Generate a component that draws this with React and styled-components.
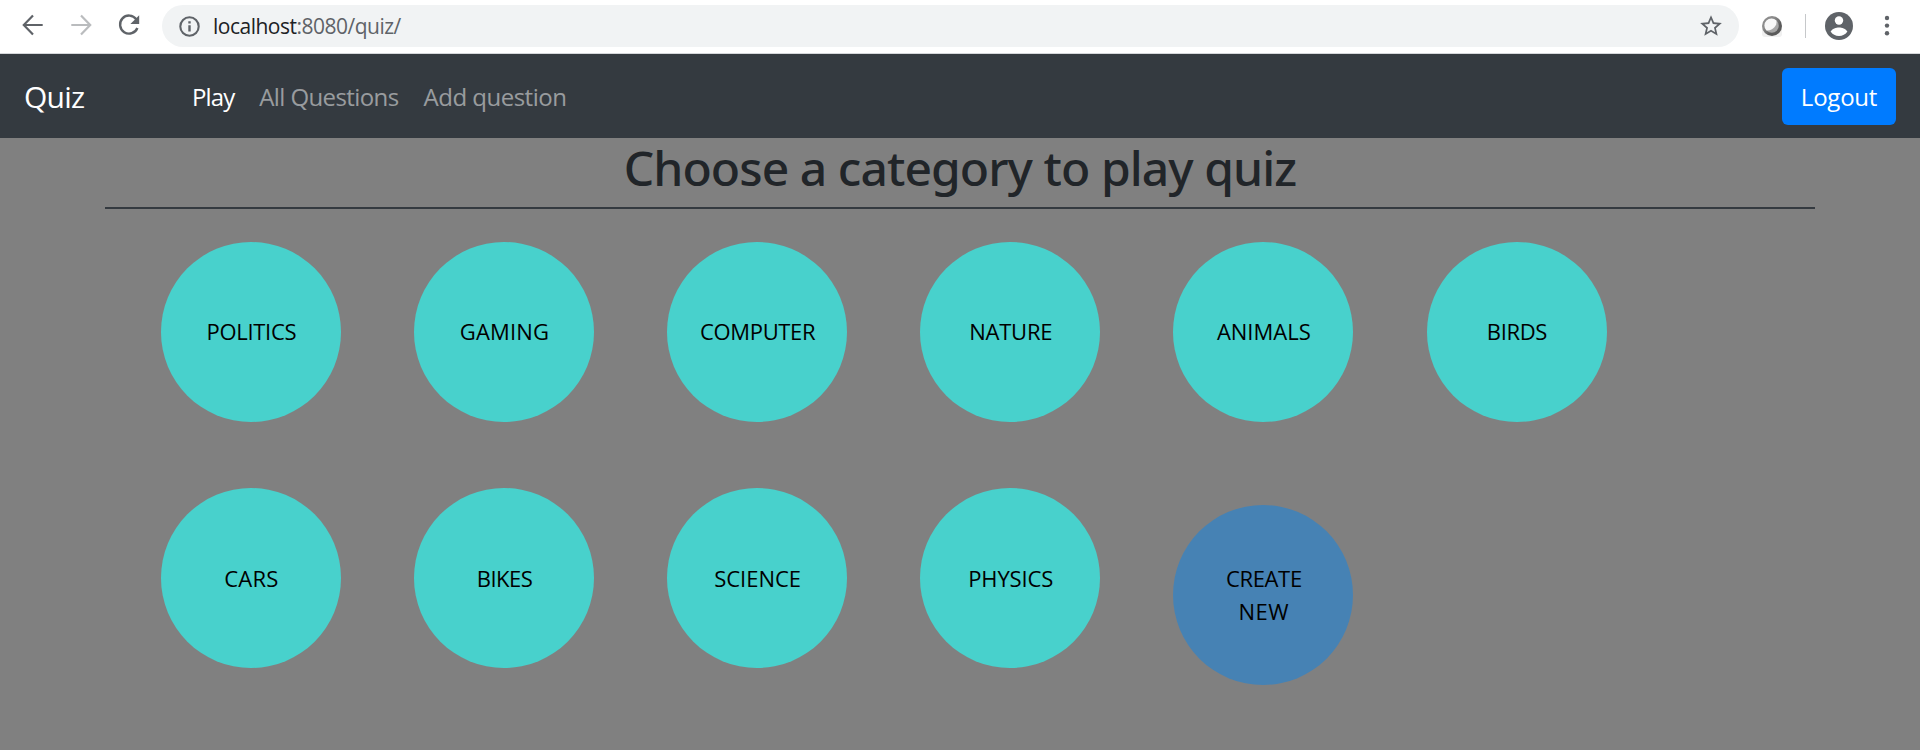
import React from 'react';
import styled, { createGlobalStyle } from 'styled-components';
import { MdStarBorder } from 'react-icons/md';

const GlobalStyle = createGlobalStyle`
  * { box-sizing: border-box; }
  body {
    margin: 0;
    background: #808080;
    font-family: 'Open Sans', 'Noto Sans', sans-serif;
    color: #212529;
    overflow: hidden;
  }
`;

const Page = styled.div`
  height: 750px;
  display: flex;
  flex-direction: column;
`;

const BrowserBar = styled.header`
  height: 54px;
  flex: none;
  display: flex;
  align-items: flex-start;
  padding: 5px 0 0 18px;
  background: #fff;
  border-bottom: 1px solid #d5d7da;
`;

const NavIcons = styled.div`
  display: flex;
  align-items: center;
  gap: 18px;
  height: 40px;
  svg { display: block; }
`;

const AddressBar = styled.div`
  height: 42px;
  width: 1577px;
  flex: none;
  margin-left: 18px;
  padding: 0 15px;
  display: flex;
  align-items: center;
  border-radius: 21px;
  background: #f1f3f4;
  color: #5f6368;
`;

const Url = styled.span`
  flex: 1;
  margin-left: 11px;
  font-size: 21px;
  line-height: 42px;
  letter-spacing: -0.5px;
  color: #5f6368;
`;

const Host = styled.span`
  color: #202124;
`;

const BrowserActions = styled.div`
  display: flex;
  align-items: center;
  height: 42px;
  margin-left: 22px;
  svg { display: block; }
`;

const Divider = styled.span`
  width: 1px;
  height: 24px;
  margin: 0 19px 0 22px;
  background: #c6c8ca;
`;

const Navbar = styled.nav`
  height: 84px;
  flex: none;
  display: flex;
  align-items: center;
  padding: 0 24px;
  background: #343a40;
`;

const Brand = styled.a`
  width: 168px;
  font-size: 30px;
  line-height: 45px;
  letter-spacing: -0.8px;
  color: #fff;
`;

const NavLinks = styled.div`
  display: flex;
  gap: 25px;
  flex: 1;
  margin-top: 2px;
`;

const NavLink = styled.a`
  font-size: 24px;
  line-height: 36px;
  white-space: nowrap;
  letter-spacing: ${(p) => p.$tracking}px;
  color: ${(p) => (p.$active ? '#fff' : 'rgba(255, 255, 255, 0.5)')};
`;

const LogoutButton = styled.button`
  width: 114px;
  height: 57px;
  margin-top: 1px;
  padding: 0;
  border: 0;
  border-radius: 6px;
  background: #007bff;
  color: #fff;
  font: 400 24px/36px 'Open Sans', 'Noto Sans', sans-serif;
  letter-spacing: -0.24px;
`;

const Main = styled.main`
  width: 1710px;
  margin: 0 auto;
`;

const Title = styled.h1`
  height: 71px;
  margin: 0;
  padding-top: 0.5px;
  border-bottom: 2px solid #343a40;
  font: 500 48px/58px 'Noto Sans', 'Open Sans', sans-serif;
  letter-spacing: -0.94px;
  text-align: center;
`;

const CategoryGrid = styled.div`
  display: grid;
  grid-template-columns: repeat(6, 180px);
  column-gap: 73.12px;
  row-gap: 66.6px;
  padding: 32.6px 0 0 56px;
`;

const Category = styled.div`
  height: 180px;
  margin-top: ${(p) => (p.$create ? 17 : 0)}px;
  display: flex;
  align-items: center;
  justify-content: center;
  border-radius: 50%;
  background: ${(p) => (p.$create ? '#4682b4' : '#48d1cc')};
  color: #000;
  font-size: 22px;
  line-height: 33px;
  text-align: center;
`;

const Label = styled.span`
  display: block;
  padding-left: 0.8px;
  letter-spacing: ${(p) => p.$tracking}px;
`;

const categories = [
  ['POLITICS', -0.3],
  ['GAMING', 0.18],
  ['COMPUTER', -0.34],
  ['NATURE', -0.24],
  ['ANIMALS', 0],
  ['BIRDS', -0.35],
  ['CARS', 0.2],
  ['BIKES', -0.5],
  ['SCIENCE', 0],
  ['PHYSICS', -0.13],
];

const ArrowIcon = ({ forward }) => (
  <svg width="30" height="30" viewBox="0 0 30 30" fill="none" stroke={forward ? '#babcbe' : '#5f6368'} strokeWidth="2.2">
    <path d={forward ? 'M5.3 15H24M15 5.6L24.2 15L15 24.4' : 'M24.7 15H6M15 5.6L5.8 15L15 24.4'} />
  </svg>
);

const ReloadIcon = () => (
  <svg width="30" height="30" viewBox="0 0 30 30">
    <path d="M22.3 9.2A9 9 0 1 0 23.4 18" fill="none" stroke="#5f6368" strokeWidth="2.4" />
    <path d="M25.2 5.2V14H16.4Z" fill="#5f6368" />
  </svg>
);

const InfoIcon = () => (
  <svg width="25" height="25" viewBox="0 0 25 25">
    <circle cx="12.5" cy="12.5" r="9.2" fill="none" stroke="#5f6368" strokeWidth="2.1" />
    <path d="M11.3 11.3H13.7V17.5H11.3ZM11.3 7.3H13.7V9.6H11.3Z" fill="#5f6368" />
  </svg>
);

const ExtensionIcon = () => (
  <svg width="22" height="22" viewBox="0 0 22 22">
    <defs>
      <linearGradient id="ring" x1="0" y1="0" x2="1" y2="1">
        <stop offset="0.35" stopColor="#8c8c8c" />
        <stop offset="0.65" stopColor="#5b5b5b" />
      </linearGradient>
    </defs>
    <rect x="1" y="11" width="20" height="11" rx="3" fill="#f0f0f0" />
    <circle cx="11" cy="11" r="10" fill="url(#ring)" />
    <circle cx="10.8" cy="10.8" r="7" fill="#a6a6a6" />
    <path d="M15.4 5.6A7 7 0 1 0 5.4 15.4C11 16.4 16.6 11 15.4 5.6Z" fill="#f7f7f7" />
  </svg>
);

const AccountIcon = () => (
  <svg width="28" height="28" viewBox="0 0 28 28">
    <circle cx="14" cy="14" r="14" fill="#5f6368" />
    <circle cx="14" cy="8.5" r="4.2" fill="#fff" />
    <path d="M5.6 19.6C7.1 16.6 11.2 15.4 14 15.4S20.9 16.6 22.4 19.6C20.6 22.4 17.5 24.1 14 24.1S7.4 22.4 5.6 19.6Z" fill="#fff" />
  </svg>
);

const MenuIcon = () => (
  <svg width="6" height="22" viewBox="0 0 6 22" fill="#5f6368">
    <circle cx="3" cy="3" r="2.2" />
    <circle cx="3" cy="10.6" r="2.2" />
    <circle cx="3" cy="18.2" r="2.2" />
  </svg>
);

const Profile = styled.div`
  display: flex;
  align-items: center;
  gap: 31px;
`;

export default function App() {
  return (
    <Page>
      <GlobalStyle />
      <BrowserBar>
        <NavIcons>
          <ArrowIcon />
          <ArrowIcon forward />
          <ReloadIcon />
        </NavIcons>
        <AddressBar>
          <InfoIcon />
          <Url><Host>localhost</Host>:8080/quiz/</Url>
          <MdStarBorder size={26} />
        </AddressBar>
        <BrowserActions>
          <ExtensionIcon />
          <Divider />
          <Profile>
            <AccountIcon />
            <MenuIcon />
          </Profile>
        </BrowserActions>
      </BrowserBar>
      <Navbar>
        <Brand>Quiz</Brand>
        <NavLinks>
          <NavLink $active $tracking={-0.9}>Play</NavLink>
          <NavLink $tracking={-0.6}>All Questions</NavLink>
          <NavLink $tracking={-0.5}>Add question</NavLink>
        </NavLinks>
        <LogoutButton>Logout</LogoutButton>
      </Navbar>
      <Main>
        <Title>Choose a category to play quiz</Title>
        <CategoryGrid>
          {categories.map(([name, tracking]) => (
            <Category key={name}>
              <Label $tracking={tracking}>{name}</Label>
            </Category>
          ))}
          <Category $create>
            <div>
              <Label $tracking={-0.34}>CREATE</Label>
              <Label $tracking={0.6}>NEW</Label>
            </div>
          </Category>
        </CategoryGrid>
      </Main>
    </Page>
  );
}
